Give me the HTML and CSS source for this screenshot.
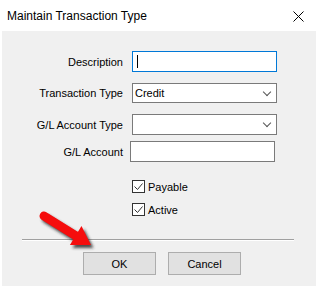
FILE: index.html
```html
<!DOCTYPE html>
<html lang="en">
<head>
    <meta charset="UTF-8">
    <title>Maintain Transaction Type</title>
    <link rel="stylesheet" href="styles.css">
</head>
<body>
    <div class="titlebar">
        <span class="title">Maintain Transaction Type</span>
        <span class="close">
            <svg width="11" height="11" viewBox="0 0 11 11"><path d="M0.5 0.5 L10.5 10.5 M10.5 0.5 L0.5 10.5" stroke="#000" stroke-width="1"/></svg>
        </span>
    </div>

    <div class="dialog">
        <div class="form">
            <div class="row row-desc">
                <label>Description</label>
                <div class="field focused"><span class="caret"></span></div>
            </div>
            <div class="row row-type">
                <label>Transaction Type</label>
                <div class="field combo">Credit<span class="chev"></span></div>
            </div>
            <div class="row row-gltype">
                <label>G/L Account Type</label>
                <div class="field combo"><span class="chev"></span></div>
            </div>
            <div class="row row-gl">
                <label>G/L Account</label>
                <div class="field shifted"></div>
            </div>

            <div class="checks">
                <div class="check"><span class="box">
                    <svg width="11" height="11" viewBox="0 0 11 11"><path d="M1.5 5.5 L4.5 8.5 L9.5 2.5" fill="none" stroke="#333" stroke-width="1"/></svg>
                </span>Payable</div>
                <div class="check"><span class="box">
                    <svg width="11" height="11" viewBox="0 0 11 11"><path d="M1.5 5.5 L4.5 8.5 L9.5 2.5" fill="none" stroke="#333" stroke-width="1"/></svg>
                </span>Active</div>
            </div>
        </div>

        <div class="separator"></div>

        <div class="buttons">
            <button class="btn">OK</button>
            <button class="btn">Cancel</button>
        </div>
    </div>

    <!-- red pointer arrow drawn over the dialog -->
    <svg class="arrow" width="316" height="286" viewBox="0 0 316 286">
        <defs>
            <filter id="shadow" x="-20%" y="-20%" width="160%" height="160%">
                <feGaussianBlur stdDeviation="1.6"/>
            </filter>
        </defs>
        <g transform="translate(2.5,3)" filter="url(#shadow)" fill="#222" stroke="#222" opacity="0.8">
            <line x1="44" y1="216" x2="77" y2="236.5" stroke-width="9" stroke-linecap="round"/>
            <polygon points="91,245 69.9,244.9 81.5,226.1" stroke="none"/>
        </g>
        <g fill="#f50d0d" stroke="#f50d0d">
            <line x1="44" y1="216" x2="77" y2="236.5" stroke-width="9" stroke-linecap="round"/>
            <polygon points="91,245 69.9,244.9 81.5,226.1" stroke="none"/>
        </g>
    </svg>
</body>
</html>
```

FILE: styles.css
```css
body {
    margin: 0;
    width: 316px;
    height: 286px;
    background: #fff;
    font-family: "Liberation Sans", Arial, sans-serif;
    font-size: 11px;
    color: #000;
    position: relative;
    overflow: hidden;
}
.titlebar {
    height: 31px;
    display: flex;
    align-items: center;
    padding: 0 12px 0 7px;
}
.title {
    flex: 1;
    font-size: 12px;
    color: #000;
}
.close {
    display: flex;
    margin-top: 2px;
}
.dialog {
    margin-left: 2px;
    height: 255px;
    background: #f0f0f0;
    overflow: hidden;
}
.form {
    padding-top: 20px;
}
.row {
    display: flex;
    align-items: center;
    height: 21px;
}
.row label {
    width: 121px;
    text-align: right;
    margin-right: 9px;
}
.row-type {
    margin-top: 11px;
    height: 20px;
}
.row-gltype {
    margin-top: 11px;
}
.row-gl {
    margin-top: 6px;
}
.field {
    box-sizing: border-box;
    width: 145px;
    height: 100%;
    background: #fff;
    border: 1px solid #7a7a7a;
    display: flex;
    align-items: center;
    padding-left: 2px;
    position: relative;
}
.field.focused {
    border-color: #0078d7;
}
.field.shifted {
    margin-left: -2px;
}
.caret {
    width: 1px;
    height: 13px;
    margin-left: 2px;
    background: #000;
}
.chev {
    position: absolute;
    right: 6px;
    top: 5px;
    width: 5px;
    height: 5px;
    border-right: 1px solid #555;
    border-bottom: 1px solid #555;
    transform: rotate(45deg);
}
.checks {
    margin: 18px 0 0 130px;
}
.check {
    display: flex;
    align-items: center;
    height: 13px;
    margin-bottom: 10px;
}
.box {
    box-sizing: border-box;
    width: 13px;
    height: 13px;
    border: 1px solid #333;
    background: #fff;
    margin-right: 3px;
    display: flex;
}
.separator {
    margin: 23px 22px 0 20px;
    height: 1px;
    background: #a0a0a0;
    border-bottom: 1px solid #fff;
}
.buttons {
    display: flex;
    gap: 12px;
    margin: 11px 0 0 81px;
}
.btn {
    box-sizing: border-box;
    width: 73px;
    height: 23px;
    background: #e1e1e1;
    border: 1px solid #adadad;
    font-family: inherit;
    font-size: 11px;
    color: #000;
    padding: 0;
}
.arrow {
    position: absolute;
    left: 0;
    top: 0;
    pointer-events: none;
}
```
